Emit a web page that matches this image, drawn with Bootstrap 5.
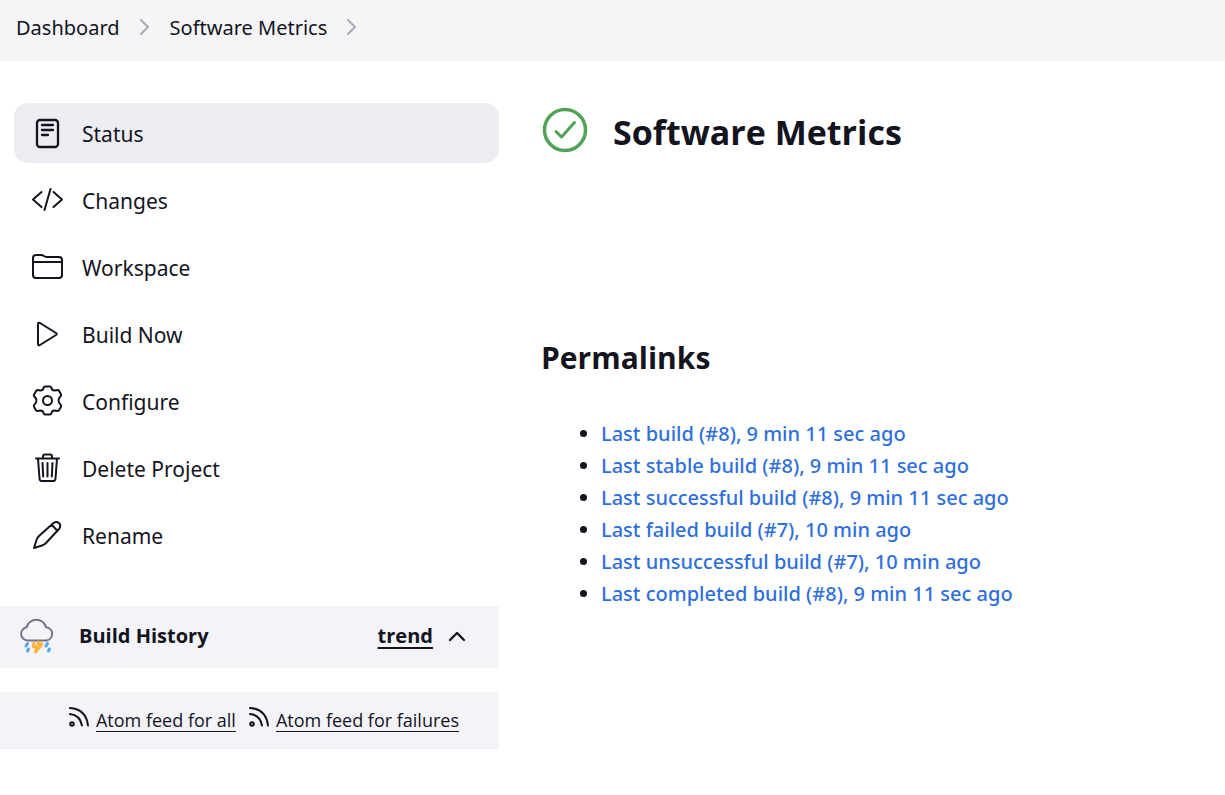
<!DOCTYPE html>
<html lang="en">
<head>
<meta charset="utf-8">
<meta name="viewport" content="width=device-width, initial-scale=1">
<title>Software Metrics</title>
<link href="https://cdn.jsdelivr.net/npm/bootstrap@5.3.0/dist/css/bootstrap.min.css" rel="stylesheet">
<style>
  :root { --ink: #14141f; --line: #f3f3f8; --blue: #2f6fdd; }
  body { font-family: "Open Sans", "Noto Sans", sans-serif; color: var(--ink); background: #fff; }
  a { color: inherit; }
  svg { flex: none; fill: none; stroke: currentColor; stroke-linecap: round; stroke-linejoin: round; }
  .crumbs { min-height: 61px; padding: 0 16px 5px; gap: 18px; background: #f5f5f7; font-family: "Noto Sans", sans-serif; font-size: 20px; }
  .crumbs svg { color: #a9a9b8; }
  .side-panel { flex: 0 0 499px; padding-top: 42px; }
  .tasks { gap: 7px; padding: 0 0 0 14px; }
  .task { height: 60px; padding: 0 16px; gap: 18px; border-radius: 14px; font-family: "Noto Sans", sans-serif; font-size: 21px; }
  .task span { padding-top: 3px; }
  .task.active { background: #ecedf2; }
  .history { height: 62px; margin-top: 41px; padding: 0 32px 2px 19px; background: var(--line); }
  .history h2 { font-size: 20px; font-weight: 700; margin-left: 24px; }
  .trend { font-size: 20px; font-weight: 700; text-underline-offset: 4px; text-decoration-thickness: 2px; }
  .fold { margin-left: 14px; color: inherit; }
  .feeds { height: 57px; margin-top: 24px; padding: 0 40px 0 20px; gap: 13px; background: var(--line); font-size: 18px; }
  .feeds a { text-underline-offset: 4px; }
  .feeds span { gap: 7px; }
  .main-panel { padding: 42px 42px; }
  h1 { font-size: 34px; font-weight: 700; }
  .headline { gap: 24px; height: 60px; }
  .headline h1 { padding-bottom: 2px; }
  .ok { color: #4fa356; margin-bottom: 6px; }
  .permalinks { margin-top: 167px; }
  .permalinks h2 { font-size: 30px; font-weight: 700; line-height: 56px; }
  .permalinks ul { margin: 32px 0 0; padding-left: 60px; font-family: "Noto Sans", sans-serif; font-size: 20px; font-weight: 500; line-height: 32px; }
  .permalinks a { color: var(--blue); }
</style>
</head>
<body>
<nav class="crumbs d-flex align-items-center" aria-label="Breadcrumb">
  <a class="text-decoration-none" href="#">Dashboard</a>
  <svg width="14" height="18" viewBox="0 0 14 18" stroke-width="2"><path d="M3 1l7 7-7 7"/></svg>
  <a class="text-decoration-none" href="#">Software Metrics</a>
  <svg width="14" height="18" viewBox="0 0 14 18" stroke-width="2"><path d="M3 1l7 7-7 7"/></svg>
</nav>
<div class="d-flex">
  <aside class="side-panel">
    <nav class="tasks d-flex flex-column">
      <a class="task active d-flex align-items-center text-decoration-none" href="#"><svg width="34" height="34" viewBox="0 0 34 34" stroke-width="2.300"><rect x="7" y="4" width="21" height="27" rx="3"/><path d="M12 9h11M12 14h11M12 19h6"/></svg><span>Status</span></a>
      <a class="task d-flex align-items-center text-decoration-none" href="#"><svg width="34" height="34" viewBox="0 0 34 34" stroke-width="2"><path d="M11.500 9L3 16.500 11.500 24M23.500 9L32 16.500 23.500 24M20.500 6L14.500 27"/></svg><span>Changes</span></a>
      <a class="task d-flex align-items-center text-decoration-none" href="#"><svg width="34" height="34" viewBox="0 0 34 34" stroke-width="2"><path d="M3 12h29M3 25V8q0-3 3-3h5q1.500 0 3 1t3 1h12q3 0 3 3v15q0 3-3 3H6q-3 0-3-3z"/></svg><span>Workspace</span></a>
      <a class="task d-flex align-items-center text-decoration-none" href="#"><svg width="34" height="34" viewBox="0 0 34 34" stroke-width="2"><path d="M8 7v20q0 2 2 1l16-10q1.500-1 0-2L10 6q-2-1-2 1z"/></svg><span>Build Now</span></a>
      <a class="task d-flex align-items-center text-decoration-none" href="#"><svg width="34" height="34" viewBox="0 0 34 34" stroke-width="2"><circle cx="17.500" cy="16.500" r="4.500"/><path transform="translate(0 -.5)" d="M15 3h5q1 0 1.500 1.500.5 2.500 3 2.500l3-.5q1 0 1.500.7l2 3.500q.5 1-.2 1.700L29 15q-1 2 0 4l1.800 2.500q.7.800.2 1.700l-2 3.500q-.5.800-1.500.8l-3-.5q-2.500 0-3 2.500Q21 31 20 31h-5q-1 0-1.500-1.500-.5-2.500-3-2.500l-3 .5q-1 0-1.500-.8l-2-3.500q-.5-1 .2-1.700L6 19q1-2 0-4l-1.800-2.100q-.7-.8-.2-1.700l2-3.500Q6.500 6.500 7.500 6.500l3 .5q2.500 0 3-2.500Q14 3 15 3z"/></svg><span>Configure</span></a>
      <a class="task d-flex align-items-center text-decoration-none" href="#"><svg width="34" height="34" viewBox="0 0 34 34" stroke-width="2"><path d="M6 7.500h23M8 7.500l1.500 20q.2 2.500 2 2.500h12q1.800 0 2-2.500L27 7.500M13 7V5.500q0-2 2-2h5q2 0 2 2V7M12.500 12l.7 13.500M17.500 12v13.500M22.500 12l-.7 13.500"/></svg><span>Delete Project</span></a>
      <a class="task d-flex align-items-center text-decoration-none" href="#"><svg width="34" height="34" viewBox="0 0 34 34" stroke-width="2"><path d="M4 30l2.500-8Q7 20 9 18L23.500 5q3-2 5.500 0 2.500 3 0 6L16 25q-2 2-4 2.500zM22 7l5.500 6"/></svg><span>Rename</span></a>
    </nav>
    <section class="history d-flex align-items-center">
      <svg width="36" height="36" viewBox="0 0 36 36" stroke-width="2"><path stroke="#74748c" d="M8.500 21.500a6.700 6.700 0 0 1-.8-13.300 10 10 0 0 1 19.300 0 6.700 6.700 0 0 1 .5 13.300z" transform="translate(0 1)"/><path stroke="#ffb238" d="M15 25l-1 3.500h3.500L16.500 34l6.500-8h-4l1-2" stroke-width="2.800"/><path stroke="#4fa9ea" stroke-width="3" d="M8.500 25.500L7 28M9.500 31L8.500 33M28.500 25.500L27 28M30.500 31l-1 2"/></svg>
      <h2 class="mb-0 me-auto">Build History</h2>
      <a class="trend" href="#">trend</a>
      <button class="fold btn p-0 border-0 d-flex" aria-label="Collapse build history"><svg width="20" height="20" viewBox="0 0 20 20" stroke-width="2.300"><path d="M3 14l7-7 7 7"/></svg></button>
    </section>
    <section class="feeds d-flex align-items-center justify-content-end">
      <span class="d-flex align-items-center"><svg class="mb-2" width="20" height="20" viewBox="0 0 20 20" stroke-width="2"><circle cx="3" cy="17" r="1.800"/><path d="M1 7q10 1 12 11.500M1 1q16 1 18 17.500"/></svg><a href="#">Atom feed for all</a></span>
      <span class="d-flex align-items-center"><svg class="mb-2" width="20" height="20" viewBox="0 0 20 20" stroke-width="2"><circle cx="3" cy="17" r="1.800"/><path d="M1 7q10 1 12 11.500M1 1q16 1 18 17.500"/></svg><a href="#">Atom feed for failures</a></span>
    </section>
  </aside>
  <main class="main-panel flex-grow-1">
    <div class="headline d-flex align-items-center">
      <svg class="ok" width="48" height="48" viewBox="0 0 48 48"><circle cx="24" cy="24" r="20.500" stroke-width="3.500"/><path stroke-width="3" d="M15 25.500l5.500 5.500L33.500 16.500"/></svg>
      <h1 class="mb-0">Software Metrics</h1>
    </div>
    <section class="permalinks">
      <h2 class="mb-0">Permalinks</h2>
      <ul>
        <li><a class="text-decoration-none" href="#">Last build (#8), 9 min 11 sec ago</a></li>
        <li><a class="text-decoration-none" href="#">Last stable build (#8), 9 min 11 sec ago</a></li>
        <li><a class="text-decoration-none" href="#">Last successful build (#8), 9 min 11 sec ago</a></li>
        <li><a class="text-decoration-none" href="#">Last failed build (#7), 10 min ago</a></li>
        <li><a class="text-decoration-none" href="#">Last unsuccessful build (#7), 10 min ago</a></li>
        <li><a class="text-decoration-none" href="#">Last completed build (#8), 9 min 11 sec ago</a></li>
      </ul>
    </section>
  </main>
</div>
<script src="https://cdn.jsdelivr.net/npm/bootstrap@5.3.0/dist/js/bootstrap.bundle.min.js"></script>
</body>
</html>
